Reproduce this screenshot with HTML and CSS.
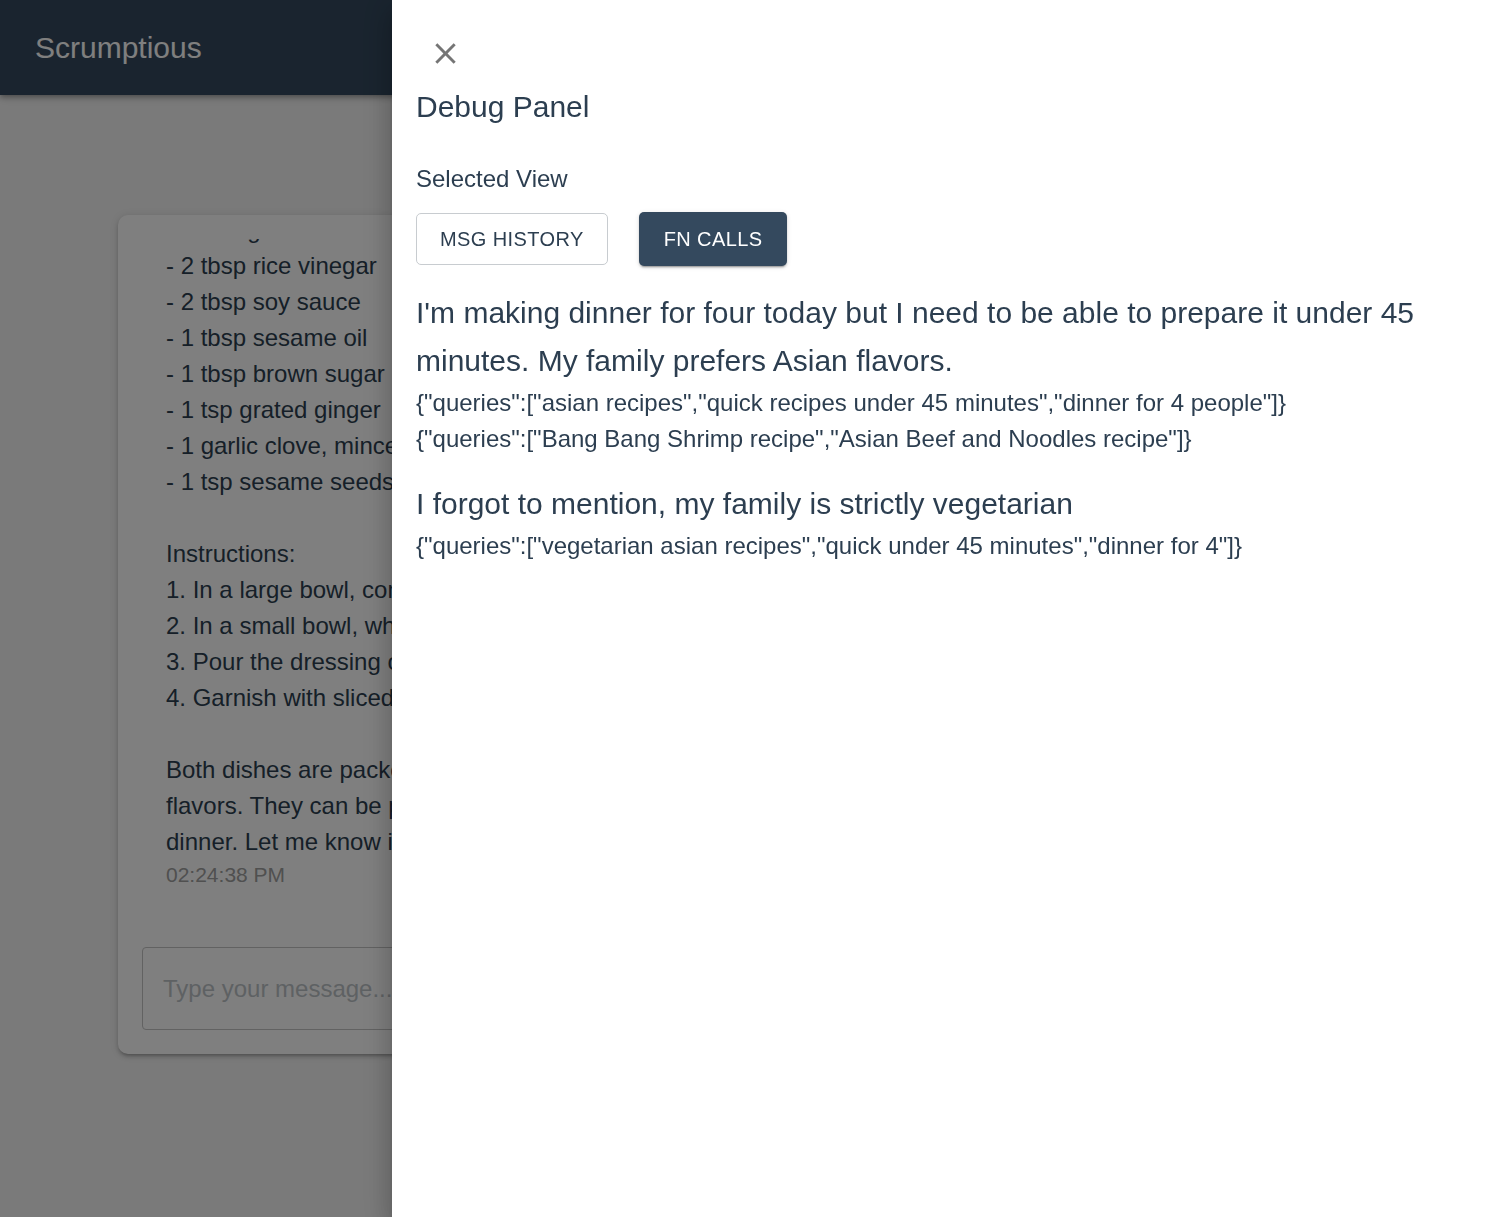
FILE: index.html
```html
<!DOCTYPE html>
<html lang="en">
<head>
<meta charset="utf-8">
<title>Scrumptious</title>
<link rel="stylesheet" href="styles.css">
</head>
<body>
<div class="app">
  <header class="appbar">
    <div class="brand">Scrumptious</div>
  </header>
  <main class="main">
    <section class="chat-card">
      <div class="messages">
        <div class="bubble">
          <div class="msg-text">
            <div class="line">Dressing:</div>
            <div class="line">- 2 tbsp rice vinegar</div>
            <div class="line">- 2 tbsp soy sauce</div>
            <div class="line">- 1 tbsp sesame oil</div>
            <div class="line">- 1 tbsp brown sugar</div>
            <div class="line">- 1 tsp grated ginger</div>
            <div class="line">- 1 garlic clove, minced</div>
            <div class="line">- 1 tsp sesame seeds</div>
            <div class="line">&nbsp;</div>
            <div class="line">Instructions:</div>
            <div class="line">1. In a large bowl, combine the noodles, cabbage, carrots, bell pepper and edamame.</div>
            <div class="line">2. In a small bowl, whisk together all the dressing ingredients.</div>
            <div class="line">3. Pour the dressing over the salad and toss well to coat.</div>
            <div class="line">4. Garnish with sliced green onions, cilantro and sesame seeds.</div>
            <div class="line">&nbsp;</div>
            <div class="line">Both dishes are packed with vegetables, protein and full of delicious Asian</div>
            <div class="line">flavors. They can be prepared in under 45 minutes, perfect for a family</div>
            <div class="line">dinner. Let me know if you need any more suggestions!</div>
          </div>
          <div class="timestamp">02:24:38 PM</div>
        </div>
      </div>
      <div class="composer">
        <span class="placeholder">Type your message...</span>
      </div>
    </section>
  </main>
</div>

<div class="backdrop"></div>

<aside class="drawer">
  <button class="close-btn" aria-label="close">
    <svg viewBox="0 0 24 24" width="35" height="35"><path d="M19 6.41 17.59 5 12 10.59 6.41 5 5 6.41 10.59 12 5 17.59 6.41 19 12 13.41 17.59 19 19 17.59 13.41 12z"/></svg>
  </button>
  <h2 class="drawer-title">Debug Panel</h2>
  <div class="view-label">Selected View</div>
  <div class="view-buttons">
    <button class="btn btn-outlined">MSG HISTORY</button>
    <button class="btn btn-contained">FN CALLS</button>
  </div>
  <div class="calls">
    <div class="call-group">
      <div class="call-prompt">I'm making dinner for four today but I need to be able to prepare it under 45 minutes. My family prefers Asian flavors.</div>
      <div class="call-json">{"queries":["asian recipes","quick recipes under 45 minutes","dinner for 4 people"]}</div>
      <div class="call-json">{"queries":["Bang Bang Shrimp recipe","Asian Beef and Noodles recipe"]}</div>
    </div>
    <div class="call-group">
      <div class="call-prompt">I forgot to mention, my family is strictly vegetarian</div>
      <div class="call-json">{"queries":["vegetarian asian recipes","quick under 45 minutes","dinner for 4"]}</div>
    </div>
  </div>
</aside>
</body>
</html>
```

FILE: styles.css
```css
* { box-sizing: border-box; }

html, body {
  margin: 0;
  padding: 0;
  height: 100%;
  overflow: hidden;
}

body {
  font-family: "Liberation Sans", Arial, sans-serif;
  background: #f4f4f4;
  color: #2c3e50;
}

.app {
  height: 100vh;
  display: flex;
  flex-direction: column;
}

.appbar {
  height: 95px;
  flex: 0 0 95px;
  background: #34495e;
  display: flex;
  align-items: center;
  padding-left: 35px;
  box-shadow: 0 2px 4px -1px rgba(0,0,0,0.2), 0 4px 5px 0 rgba(0,0,0,0.14), 0 1px 10px 0 rgba(0,0,0,0.12);
  position: relative;
  z-index: 1;
}

.brand {
  color: #ffffff;
  font-size: 30px;
  line-height: 36px;
}

.main {
  flex: 1;
  padding: 120px 118px 0 118px;
}

.chat-card {
  height: 839px;
  background: #ffffff;
  border-radius: 10px;
  padding: 24px;
  display: flex;
  flex-direction: column;
  box-shadow: 0 3px 3px -2px rgba(0,0,0,0.2), 0 3px 4px 0 rgba(0,0,0,0.14), 0 1px 8px 0 rgba(0,0,0,0.12);
}

.messages {
  flex: 1;
  overflow: hidden;
  margin-bottom: 24px;
}

.bubble {
  padding-left: 24px;
}

.msg-text {
  margin-top: -27px;
  font-size: 24px;
  line-height: 36px;
  color: #2c3e50;
}

.line {
  white-space: nowrap;
}

.timestamp {
  font-size: 21px;
  line-height: 30px;
  color: #a0a0a0;
}

.composer {
  flex: 0 0 83px;
  height: 83px;
  border: 1px solid #c4c4c4;
  border-radius: 4px;
  display: flex;
  align-items: center;
  padding-left: 20px;
}

.placeholder {
  font-size: 24px;
  color: #bdc3c7;
}

.backdrop {
  position: fixed;
  inset: 0;
  background: rgba(0,0,0,0.5);
  z-index: 10;
}

.drawer {
  position: fixed;
  top: 0;
  right: 0;
  bottom: 0;
  width: 1098px;
  background: #ffffff;
  z-index: 20;
  padding: 28px 24px 24px 24px;
  box-shadow: 0 8px 10px -5px rgba(0,0,0,0.2), 0 16px 24px 2px rgba(0,0,0,0.14), 0 6px 30px 5px rgba(0,0,0,0.12);
}

.close-btn {
  display: block;
  margin: 0 0 0 4px;
  padding: 8px;
  width: 51px;
  height: 51px;
  border: none;
  background: transparent;
  border-radius: 50%;
  cursor: pointer;
}

.close-btn svg {
  display: block;
  fill: #757575;
}

.drawer-title {
  margin: 10px 0 0 0;
  font-size: 30px;
  line-height: 36px;
  font-weight: 400;
  color: #2c3e50;
}

.view-label {
  margin-top: 36px;
  font-size: 24px;
  line-height: 36px;
  color: #2c3e50;
}

.view-buttons {
  margin-top: 15px;
  height: 54px;
  display: flex;
  align-items: center;
  gap: 31px;
}

.btn {
  font-family: "Liberation Sans", Arial, sans-serif;
  font-size: 20px;
  letter-spacing: 0.4px;
  text-transform: uppercase;
  border-radius: 5px;
  cursor: pointer;
  line-height: 24px;
}

.btn-outlined {
  height: 52px;
  padding: 0 23px;
  background: #ffffff;
  color: #2c3e50;
  border: 1px solid #c8ccd0;
}

.btn-contained {
  height: 54px;
  padding: 0 25px;
  background: #34495e;
  color: #ffffff;
  border: none;
  box-shadow: 0 3px 1px -2px rgba(0,0,0,0.2), 0 2px 2px 0 rgba(0,0,0,0.14), 0 1px 5px 0 rgba(0,0,0,0.12);
}

.call-group {
  margin-top: 23px;
}

.call-prompt {
  font-size: 30px;
  line-height: 48px;
  color: #2c3e50;
}

.call-json {
  font-size: 24px;
  line-height: 36px;
  color: #2c3e50;
}
```
